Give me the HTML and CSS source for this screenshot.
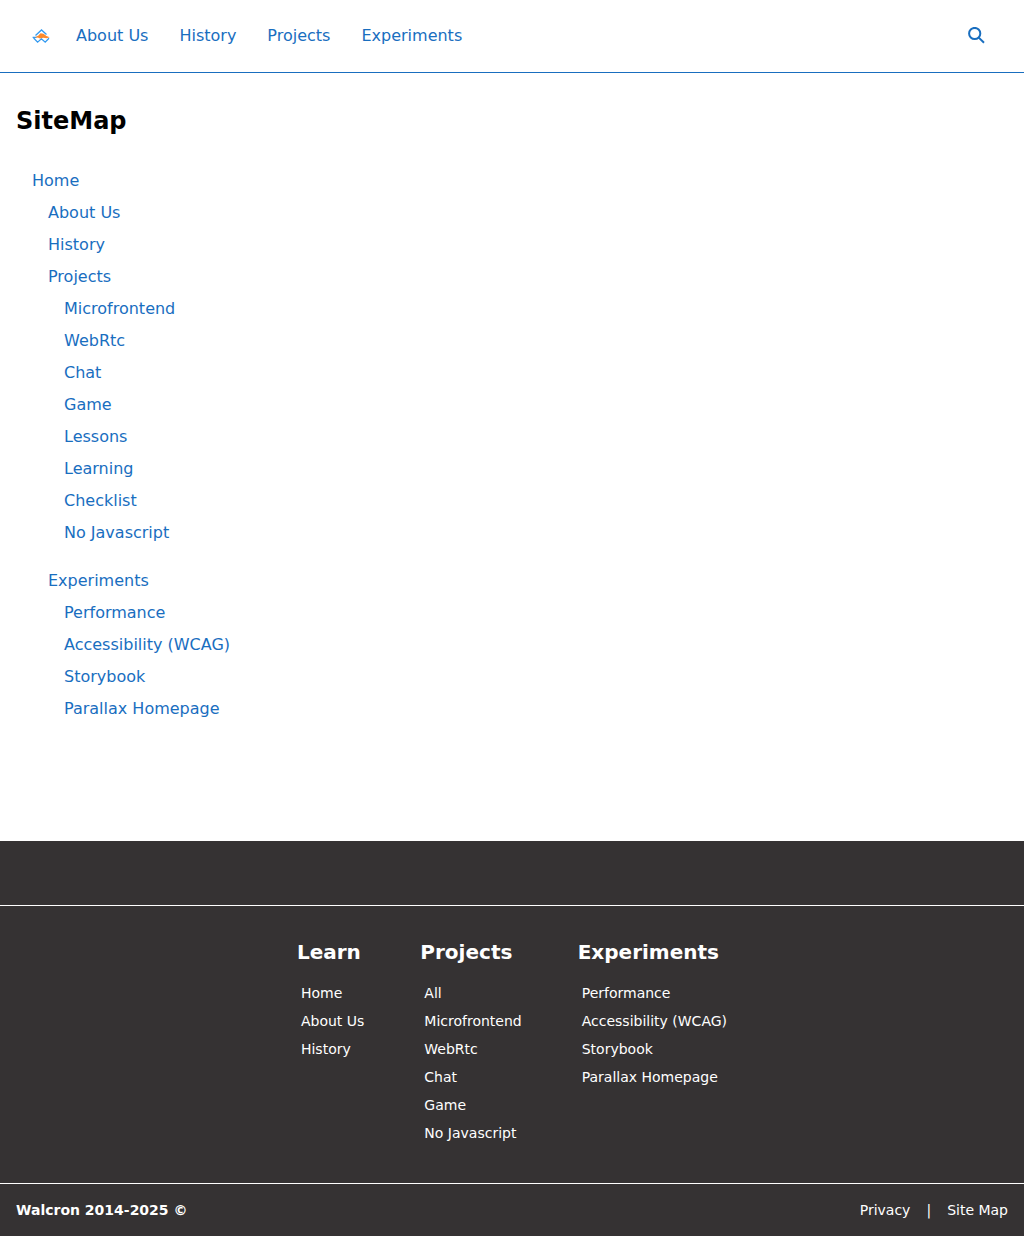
FILE: index.html
```html
<!DOCTYPE html>
<html lang="en">
<head>
<meta charset="utf-8">
<title>SiteMap</title>
<link rel="stylesheet" href="styles.css">
</head>
<body>
<header class="header">
  <nav class="nav">
    <a class="logo" href="#" aria-label="Home"><svg width="18" height="18" viewBox="0 0 18 18" fill="none"><path d="M3.5 8.5L9.5 3l5 4.5M.6 10.3h4M1.6 11l4 4.2 3.8-3.4 3.8 3.4 3.8-4" stroke="#339af0" stroke-width="1.3"/><path d="M3 10.2l3.5-1.8L8.5 6.2l3 .5 3 2.3 3.2 1.3-3.2.9-3.2-.4-3.3.6-1.6-.7z" fill="#fd8a2b"/></svg></a>
    <a href="#">About Us</a>
    <a href="#">History</a>
    <a href="#">Projects</a>
    <a href="#">Experiments</a>
  </nav>
  <a class="search" href="#" aria-label="Search"><svg width="18" height="18" viewBox="0 0 18 18" fill="none" stroke="#196ebf" stroke-width="2"><circle cx="6.7" cy="6.5" r="5.6"/><path d="M10.8 10.6l5.2 5.2"/></svg></a>
</header>
<main class="main">
  <h1 class="title">SiteMap</h1>
  <ul class="tree">
    <li><a href="#">Home</a>
      <ul>
        <li><a href="#">About Us</a></li>
        <li><a href="#">History</a></li>
        <li><a href="#">Projects</a>
          <ul class="leaf">
            <li><a href="#">Microfrontend</a></li>
            <li><a href="#">WebRtc</a></li>
            <li><a href="#">Chat</a></li>
            <li><a href="#">Game</a></li>
            <li><a href="#">Lessons</a></li>
            <li><a href="#">Learning</a></li>
            <li><a href="#">Checklist</a></li>
            <li><a href="#">No Javascript</a></li>
          </ul>
        </li>
        <li><a href="#">Experiments</a>
          <ul class="leaf">
            <li><a href="#">Performance</a></li>
            <li><a href="#">Accessibility (WCAG)</a></li>
            <li><a href="#">Storybook</a></li>
            <li><a href="#">Parallax Homepage</a></li>
          </ul>
        </li>
      </ul>
    </li>
  </ul>
</main>
<footer class="footer">
  <div class="columns">
    <section>
      <h2>Learn</h2>
      <ul><li><a href="#">Home</a></li><li><a href="#">About Us</a></li><li><a href="#">History</a></li></ul>
    </section>
    <section>
      <h2>Projects</h2>
      <ul><li><a href="#">All</a></li><li><a href="#">Microfrontend</a></li><li><a href="#">WebRtc</a></li><li><a href="#">Chat</a></li><li><a href="#">Game</a></li><li><a href="#">No Javascript</a></li></ul>
    </section>
    <section>
      <h2>Experiments</h2>
      <ul><li><a href="#">Performance</a></li><li><a href="#">Accessibility (WCAG)</a></li><li><a href="#">Storybook</a></li><li><a href="#">Parallax Homepage</a></li></ul>
    </section>
  </div>
  <div class="legal">
    <strong>Walcron 2014-2025 ©</strong>
    <div class="links"><a href="#">Privacy</a><span>|</span><a href="#">Site Map</a></div>
  </div>
</footer>
</body>
</html>
```
FILE: styles.css
```css
* { box-sizing: border-box; }
body { margin: 0; min-height: 1236px; display: flex; flex-direction: column; font: 16px/24px "DejaVu Sans", sans-serif; color: #000; background: #fff; }
a { color: #196ebf; text-decoration: none; }
ul { list-style: none; margin: 0; padding: 0; }
svg { display: block; }
.header { height: 73px; padding: 0 38px 0 32px; display: flex; align-items: center; justify-content: space-between; border-bottom: 1px solid #196ebf; }
.nav { display: flex; align-items: center; gap: 31px; }
.logo { margin-right: -5px; }
.main { flex: 1; padding: 32px 16px 0; }
.title { margin: 0; font-size: 24px; line-height: 32px; }
.tree { margin-top: 28px; line-height: 32px; }
.tree, .tree ul { padding-left: 16px; }
.leaf { padding-bottom: 16px; }
.footer { height: 395px; padding-top: 64px; background: #353233; color: #fff; font-size: 14px; }
.footer a { color: #fff; }
.columns { height: 278px; padding-top: 32px; display: flex; justify-content: center; gap: 56px; border-top: 1px solid #fff; }
.columns h2 { margin: 0 0 13px; font-size: 20px; line-height: 28px; }
.columns ul { padding-left: 4px; line-height: 28px; }
.legal { height: 53px; padding: 0 16px; display: flex; align-items: center; justify-content: space-between; border-top: 1px solid #fff; }
.links { display: flex; gap: 16px; }
```
